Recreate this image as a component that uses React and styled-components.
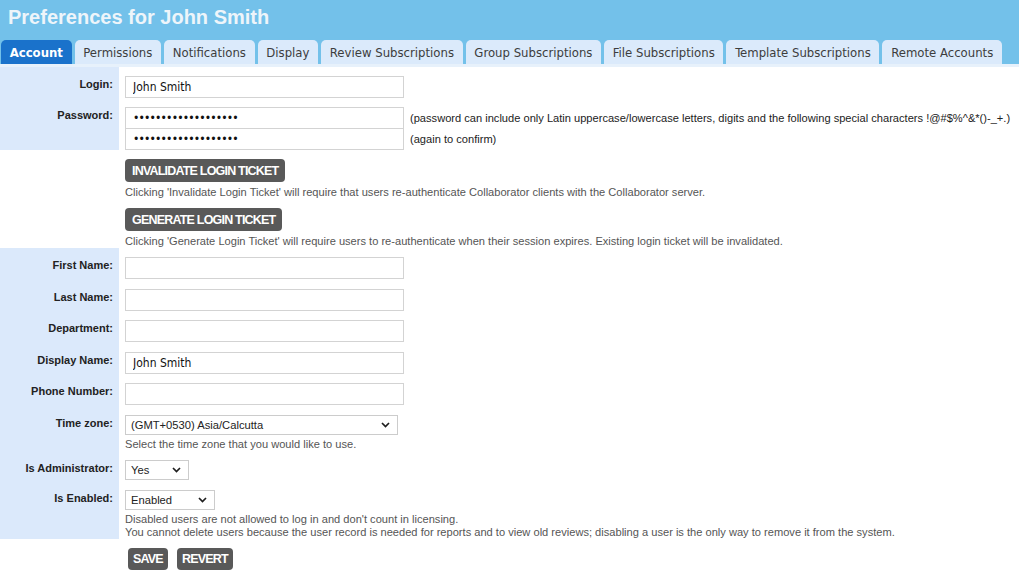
import React from 'react';
import styled, { createGlobalStyle } from 'styled-components';

const GlobalStyle = createGlobalStyle`
  html, body { margin: 0; padding: 0; background: #fff; }
  body { font-family: "Liberation Sans", Arial, sans-serif; color: #222; }
`;

const Page = styled.div`
  width: 1019px;
  min-height: 578px;
`;

const Header = styled.header`
  background: #73c1ea;
  border-bottom: 3px solid #e7f1fb;
  padding-top: 5px;
`;

const Title = styled.h1`
  margin: 0 0 11px 8px;
  font: bold 20px/24px "Liberation Sans", Arial, sans-serif;
  color: #eef5fa;
`;

const TabBar = styled.nav`
  display: flex;
  gap: 3px;
  padding-left: 1px;
  height: 24px;
`;

const Tab = styled.div`
  height: 24px;
  box-sizing: border-box;
  padding: 0 8.7px;
  display: flex;
  align-items: center;
  border-radius: 5px 5px 0 0;
  font-family: "DejaVu Sans Condensed", "DejaVu Sans", sans-serif;
  font-size: 13px;
  font-weight: ${(p) => (p.$active ? 700 : 400)};
  color: ${(p) => (p.$active ? '#ffffff' : '#3d3d3d')};
  background: ${(p) => (p.$active ? '#1a72cb' : '#dbeafb')};
  white-space: nowrap;
`;

const Section = styled.section`
  display: grid;
  grid-template-columns: 119px 1fr;
  column-gap: 6px;
  row-gap: ${(p) => p.$gap ?? 9}px;
  padding-top: 9px;
  background: ${(p) =>
    p.$shaded ? 'linear-gradient(to right, #dbe9fb 119px, #ffffff 119px)' : '#ffffff'};
`;

const Label = styled.label`
  grid-column: 1;
  justify-self: end;
  padding: 1px 6px 0 0;
  font: bold 11px/14px "Liberation Sans", Arial, sans-serif;
  color: #222;
`;

const Field = styled.div`
  grid-column: 2;
  display: flex;
  flex-direction: column;
  align-items: flex-start;
`;

const TextInput = styled.input`
  box-sizing: border-box;
  width: 279px;
  height: 22px;
  margin: 0;
  border: 1px solid #d3d3d3;
  padding: 0 7px;
  font: 12px "DejaVu Sans Condensed", "DejaVu Sans", sans-serif;
  letter-spacing: ${(p) => (p.type === 'password' ? '-0.85px' : 'normal')};
  color: #111;
  background: #fff;
  &:focus { outline: none; }
`;

const InputLine = styled.div`
  display: flex;
  align-items: center;
  & + & { margin-top: -1px; }
`;

const Hint = styled.span`
  margin-left: 6px;
  font: 11.1px/13px "Liberation Sans", Arial, sans-serif;
  color: #222;
  white-space: nowrap;
`;

const Note = styled.div`
  margin-top: 3px;
  font: 11.1px/13px "Liberation Sans", Arial, sans-serif;
  color: #555;
  white-space: nowrap;
`;

const ActionButton = styled.button`
  height: ${(p) => p.$height ?? 23}px;
  margin: 0;
  padding: 0 ${(p) => p.$pad ?? 7}px;
  border: none;
  border-radius: 4px;
  background: #595959;
  color: #fff;
  font: bold 12.5px "Liberation Sans", Arial, sans-serif;
  letter-spacing: -0.8px;
  cursor: pointer;
  & + ${Note} { margin-top: 4px; }
  ${Note} + & { margin-top: 9px; }
`;

const SelectBox = styled.div`
  position: relative;
  width: ${(p) => p.$width}px;
  height: 20px;
`;

const Select = styled.select`
  appearance: none;
  box-sizing: border-box;
  width: 100%;
  height: 20px;
  margin: 0;
  border: 1px solid #cccccc;
  border-radius: 0;
  padding: 0 0 0 5px;
  background: #fff;
  font: 11.2px "Liberation Sans", Arial, sans-serif;
  color: #222;
  &:focus { outline: none; }
`;

const Chevron = styled.svg`
  position: absolute;
  right: 8px;
  top: 7px;
  pointer-events: none;
`;

const Footer = styled.div`
  display: flex;
  gap: 9px;
  padding: 9px 0 0 128px;
`;

const tabs = [
  'Account',
  'Permissions',
  'Notifications',
  'Display',
  'Review Subscriptions',
  'Group Subscriptions',
  'File Subscriptions',
  'Template Subscriptions',
  'Remote Accounts',
];

const Dropdown = ({ width, value, options }) => (
  <SelectBox $width={width}>
    <Select value={value} onChange={() => {}}>
      {options.map((o) => (
        <option key={o}>{o}</option>
      ))}
    </Select>
    <Chevron width="9" height="6" viewBox="0 0 9 6">
      <path d="M1 1 L4.5 4.5 L8 1" fill="none" stroke="#1e1e1e" strokeWidth="1.7" />
    </Chevron>
  </SelectBox>
);

const password = '•'.repeat(19);

export default function App() {
  return (
    <Page>
      <GlobalStyle />
      <Header>
        <Title>Preferences for John Smith</Title>
        <TabBar>
          {tabs.map((t, i) => (
            <Tab key={t} $active={i === 0}>
              {t}
            </Tab>
          ))}
        </TabBar>
      </Header>

      <Section $shaded>
        <Label>Login:</Label>
        <Field>
          <TextInput value="John Smith" readOnly />
        </Field>
        <Label>Password:</Label>
        <Field>
          <InputLine>
            <TextInput type="password" value={password} readOnly />
            <Hint>
              (password can include only Latin uppercase/lowercase letters, digits and the
              following special characters !@#$%^&amp;*()-_+.)
            </Hint>
          </InputLine>
          <InputLine>
            <TextInput type="password" value={password} readOnly />
            <Hint>(again to confirm)</Hint>
          </InputLine>
        </Field>
      </Section>

      <Section>
        <Field>
          <ActionButton>INVALIDATE LOGIN TICKET</ActionButton>
          <Note>
            Clicking 'Invalidate Login Ticket' will require that users re-authenticate
            Collaborator clients with the Collaborator server.
          </Note>
          <ActionButton>GENERATE LOGIN TICKET</ActionButton>
          <Note>
            Clicking 'Generate Login Ticket' will require users to re-authenticate when their
            session expires. Existing login ticket will be invalidated.
          </Note>
        </Field>
      </Section>

      <Section $shaded $gap={9.5}>
        <Label>First Name:</Label>
        <Field>
          <TextInput value="" readOnly />
        </Field>
        <Label>Last Name:</Label>
        <Field>
          <TextInput value="" readOnly />
        </Field>
        <Label>Department:</Label>
        <Field>
          <TextInput value="" readOnly />
        </Field>
        <Label>Display Name:</Label>
        <Field>
          <TextInput value="John Smith" readOnly />
        </Field>
        <Label>Phone Number:</Label>
        <Field>
          <TextInput value="" readOnly />
        </Field>
        <Label>Time zone:</Label>
        <Field>
          <Dropdown
            width={273}
            value="(GMT+0530) Asia/Calcutta"
            options={['(GMT+0530) Asia/Calcutta']}
          />
          <Note>Select the time zone that you would like to use.</Note>
        </Field>
        <Label>Is Administrator:</Label>
        <Field>
          <Dropdown width={64} value="Yes" options={['Yes', 'No']} />
        </Field>
        <Label>Is Enabled:</Label>
        <Field>
          <Dropdown width={90} value="Enabled" options={['Enabled', 'Disabled']} />
          <Note>
            Disabled users are not allowed to log in and don't count in licensing.
            <br />
            You cannot delete users because the user record is needed for reports and to view
            old reviews; disabling a user is the only way to remove it from the system.
          </Note>
        </Field>
      </Section>

      <Footer>
        <ActionButton $height={22} $pad={5}>SAVE</ActionButton>
        <ActionButton $height={22} $pad={5}>REVERT</ActionButton>
      </Footer>
    </Page>
  );
}
